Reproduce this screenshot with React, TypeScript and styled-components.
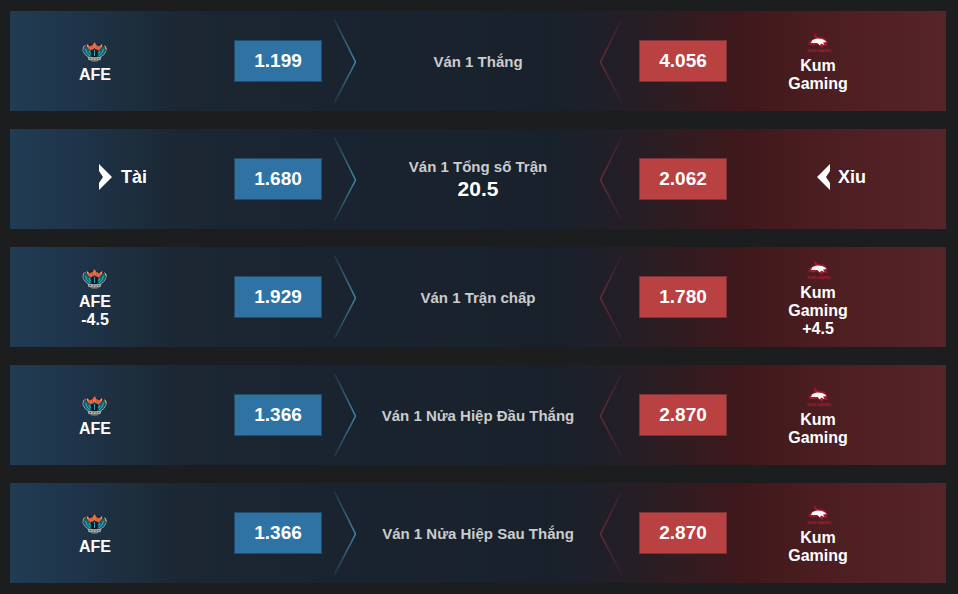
import React from "react";
import styled, { createGlobalStyle } from "styled-components";

type Tone = "blue" | "red";

interface Side {
  name: string;
  odds: string;
  handicap?: string;
}

interface Market {
  label: string;
  line?: string;
  kind: "teams" | "total";
  home: Side;
  away: Side;
}

const markets: Market[] = [
  {
    label: "Ván 1 Thắng",
    kind: "teams",
    home: { name: "AFE", odds: "1.199" },
    away: { name: "Kum Gaming", odds: "4.056" },
  },
  {
    label: "Ván 1 Tổng số Trận",
    line: "20.5",
    kind: "total",
    home: { name: "Tài", odds: "1.680" },
    away: { name: "Xỉu", odds: "2.062" },
  },
  {
    label: "Ván 1 Trận chấp",
    kind: "teams",
    home: { name: "AFE", odds: "1.929", handicap: "-4.5" },
    away: { name: "Kum Gaming", odds: "1.780", handicap: "+4.5" },
  },
  {
    label: "Ván 1 Nửa Hiệp Đầu Thắng",
    kind: "teams",
    home: { name: "AFE", odds: "1.366" },
    away: { name: "Kum Gaming", odds: "2.870" },
  },
  {
    label: "Ván 1 Nửa Hiệp Sau Thắng",
    kind: "teams",
    home: { name: "AFE", odds: "1.366" },
    away: { name: "Kum Gaming", odds: "2.870" },
  },
];

const GlobalStyle = createGlobalStyle`
  * { box-sizing: border-box; }
  body {
    margin: 0;
    background: #1c1d1e;
    color: #fff;
    font-family: "Liberation Sans", Arial, sans-serif;
    font-weight: 700;
  }
`;

const MarketList = styled.main`
  display: flex;
  flex-direction: column;
  gap: 18px;
  padding: 11px 12px 11px 10px;
`;

const MarketRow = styled.section`
  display: grid;
  grid-template-columns: 170fr 142fr 34px 244fr 39px 88px 182fr 37fr;
  align-items: center;
  min-height: 100px;
  background: linear-gradient(
    90deg,
    #203c52 0%,
    #1f344b 7%,
    #1d2f3f 12%,
    #1b2733 18%,
    #1a2430 34%,
    #18212b 58%,
    #1f1f29 63%,
    #2d1d22 70%,
    #3e181b 78%,
    #4b1d20 86%,
    #562429 100%
  );
`;

const Team = styled.div`
  display: flex;
  flex-direction: column;
  align-items: center;
  min-width: 0;
  padding-top: 2px;
  font-size: 16px;
  line-height: 18px;
  text-align: center;
`;

const TeamName = styled.span`
  max-width: 80px;
`;

const TotalSide = styled.div<{ $tone: Tone }>`
  display: flex;
  align-items: center;
  justify-content: center;
  gap: 8px;
  min-width: 0;
  padding-bottom: 4px;
  padding-left: ${(p) => (p.$tone === "blue" ? "56px" : "46px")};
  font-size: 18px;
  line-height: 24px;
`;

const OddsButton = styled.button<{ $tone: Tone }>`
  justify-self: end;
  width: 88px;
  height: 42px;
  padding: 0;
  border: 1px solid ${(p) => (p.$tone === "blue" ? "#234c69" : "#7c3237")};
  background: ${(p) => (p.$tone === "blue" ? "#2e73a3" : "#b94142")};
  color: #fff;
  font: inherit;
  font-size: 19px;
  cursor: pointer;
`;

const MarketInfo = styled.div`
  display: flex;
  flex-direction: column;
  align-items: center;
  padding-top: 2px;
  text-align: center;
`;

const MarketLabel = styled.h2`
  margin: 0;
  color: #cbcccd;
  font-size: 15px;
  line-height: 20px;
`;

const MarketLine = styled.span`
  padding-bottom: 2px;
  font-size: 21px;
  line-height: 24px;
`;

const Divider = styled.svg<{ $tone: Tone }>`
  display: block;
  justify-self: ${(p) => (p.$tone === "blue" ? "end" : "start")};
`;

const Logo = styled.svg`
  display: block;
  flex: none;
`;

function Chevron({ tone, id }: { tone: Tone; id: string }) {
  const color = tone === "blue" ? "#3d88a8" : "#6c2b33";
  return (
    <Divider $tone={tone} width="22" height="84" viewBox="0 0 22 84" aria-hidden="true">
      <defs>
        <linearGradient id={id} x1="0" y1="0" x2="0" y2="84" gradientUnits="userSpaceOnUse">
          <stop offset="0" stopColor={color} stopOpacity="0.15" />
          <stop offset="0.5" stopColor={color} />
          <stop offset="1" stopColor={color} stopOpacity="0.15" />
        </linearGradient>
      </defs>
      <path
        d={tone === "blue" ? "M0.5 0.5 21.5 43 0.5 83.5" : "M21.5 0.5 0.5 43 21.5 83.5"}
        fill="none"
        stroke={`url(#${id})`}
        strokeWidth="1.5"
      />
    </Divider>
  );
}

function AfeLogo() {
  return (
    <Logo width="26" height="26" viewBox="0 0 26 26" aria-hidden="true">
      <path
        d="M0.5 6 5 4 20 4 24.5 6 25 12 21 16.5 18 18 18 20 12.5 21.5 7 20 7 18 3 16 0 11Z"
        fill="#18242e"
      />
      <path d="M1.5 8 4 6 6 9 9 11 9.5 17 6 16 3 14ZM23.5 8 21 6 19 9 16 11 15.5 17 19 16 22 14Z" fill="#0d6675" />
      <path d="M3.5 9 5 13 8 16M7 11 8.5 14M21.5 9 20 13 17 16M18 11 16.5 14" stroke="#3aa9b8" fill="none" />
      <path d="M9.5 10 12.5 13 15.5 10 15 17H10Z" fill="#111820" />
      <path d="M12.5 10V16" stroke="#3398b8" />
      <path d="M5.5 4 8 6.5 9.5 5 11.5 9 8.5 10.5 5.5 8ZM19.5 4 17 6.5 15.5 5 13.5 9 16.5 10.5 19.5 8Z" fill="#e9613b" />
      <path d="M12.5 2 15 6 13.5 9.5 12.5 8 11.5 9.5 10 6Z" fill="#f36844" />
      <path d="M5 4.5 6 7M20 4.5 19 7" stroke="#eec08e" />
      <path d="M1.5 6Q-0.5 11 3 14.5L6.5 17M23.5 6Q25.5 11 22 14.5L18.5 17" stroke="#9ca6a7" fill="none" />
      <path d="M1 6.5 4 5.5" stroke="#c98270" />
      <path d="M22.5 5.5 24.5 9" stroke="#d9aa70" />
      <path d="M5.5 16.5Q12.5 18 19.5 16.5L18.5 20Q12.5 21 6.5 20Z" fill="#a9aeac" />
      <path d="M7.5 18.5H9M10.5 19H12M13.5 19H15M16 18.5H17.5" stroke="#4a575f" />
      <path d="M9.5 21H15.5" stroke="#a58e70" />
    </Logo>
  );
}

const LogoCaption = styled.text`
  font-family: "Liberation Sans", Arial, sans-serif;
  font-size: 7px;
  font-weight: 700;
`;

function KumLogo() {
  return (
    <Logo width="26" height="26" viewBox="0 0 52 52" aria-hidden="true">
      <path
        d="M17 4 26 12 37 13 41 16 46 24 42 24 46 30 37 29 34 34 29 29 23 27 17 29 13 28 7 27 9 20 20 14Z"
        fill="#a31a2f"
      />
      <path
        d="M15 18 24 15 34 16 40 19 43 22 36 23 39 28 32 25 30 29 25 24 19 24 12 24 14 20Z"
        fill="#ffffff"
      />
      <LogoCaption x="28" y="42" textAnchor="middle" fill="#a91f33">
        KUM GAMING
      </LogoCaption>
    </Logo>
  );
}

function Arrow({ tone }: { tone: Tone }) {
  return (
    <Logo width="14" height="26" viewBox="0 0 14 26" aria-hidden="true">
      <path
        d={tone === "blue" ? "M0 0 13 13 0 26V19L4 13 0 7Z" : "M14 0 1 13 14 26V19L10 13 14 7Z"}
        fill="#fff"
      />
    </Logo>
  );
}

function Contender({ side, tone, kind }: { side: Side; tone: Tone; kind: Market["kind"] }) {
  if (kind === "total") {
    return (
      <TotalSide $tone={tone}>
        <Arrow tone={tone} />
        <span>{side.name}</span>
      </TotalSide>
    );
  }
  return (
    <Team>
      {tone === "blue" ? <AfeLogo /> : <KumLogo />}
      <TeamName>{side.name}</TeamName>
      {side.handicap && <span>{side.handicap}</span>}
    </Team>
  );
}

export default function App() {
  return (
    <>
      <GlobalStyle />
      <MarketList>
        {markets.map((m, i) => (
          <MarketRow key={m.label} aria-label={m.label}>
            <Contender side={m.home} tone="blue" kind={m.kind} />
            <OddsButton type="button" $tone="blue" aria-label={`${m.home.name} ${m.home.odds}`}>
              {m.home.odds}
            </OddsButton>
            <Chevron tone="blue" id={`home-${i}`} />
            <MarketInfo>
              <MarketLabel>{m.label}</MarketLabel>
              {m.line && <MarketLine>{m.line}</MarketLine>}
            </MarketInfo>
            <Chevron tone="red" id={`away-${i}`} />
            <OddsButton type="button" $tone="red" aria-label={`${m.away.name} ${m.away.odds}`}>
              {m.away.odds}
            </OddsButton>
            <Contender side={m.away} tone="red" kind={m.kind} />
          </MarketRow>
        ))}
      </MarketList>
    </>
  );
}
